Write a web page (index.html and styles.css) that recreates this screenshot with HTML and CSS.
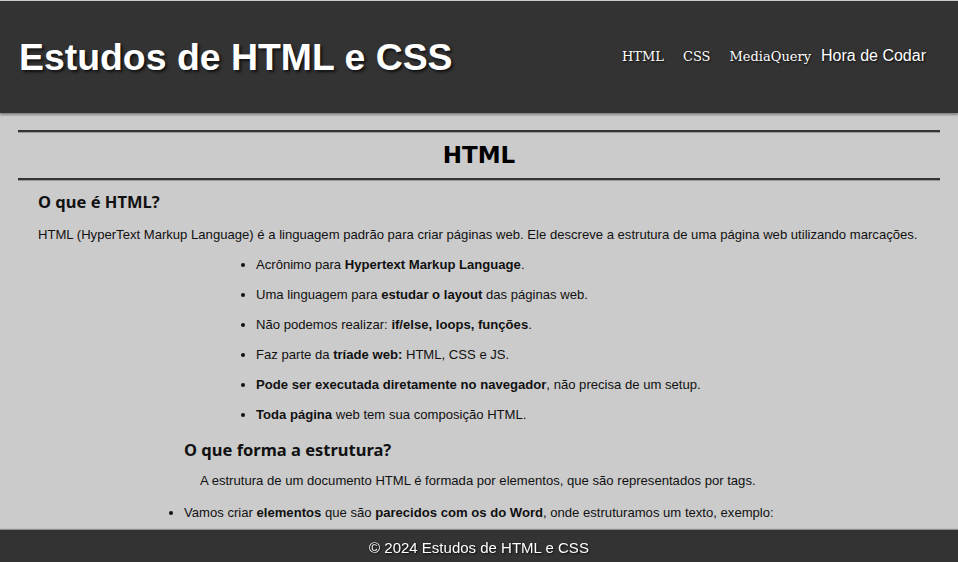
FILE: index.html
```html
<!DOCTYPE html>
<html lang="pt-BR">
<head>
<meta charset="utf-8">
<title>Estudos de HTML e CSS</title>
<link rel="stylesheet" href="styles.css">
</head>
<body>
<header class="topo">
  <h1 class="titulo">Estudos de HTML e CSS</h1>
  <nav class="menu">
    <a class="menu-link" href="#">HTML</a>
    <a class="menu-link" href="#">CSS</a>
    <a class="menu-link" href="#">MediaQuery</a>
    <a class="menu-link menu-sans" href="#">Hora de Codar</a>
  </nav>
</header>
<main class="conteudo">
  <hr class="linha">
  <h2 class="secao">HTML</h2>
  <hr class="linha">
  <h3 class="sub">O que é HTML?</h3>
  <p class="texto">HTML (HyperText Markup Language) é a linguagem padrão para criar páginas web. Ele descreve a estrutura de uma página web utilizando marcações.</p>
  <ul class="lista">
    <li>Acrônimo para <strong>Hypertext Markup Language</strong>.</li>
    <li>Uma linguagem para <strong>estudar o layout</strong> das páginas web.</li>
    <li>Não podemos realizar: <strong>if/else, loops, funções</strong>.</li>
    <li>Faz parte da <strong>tríade web:</strong> HTML, CSS e JS.</li>
    <li><strong>Pode ser executada diretamente no navegador</strong>, não precisa de um setup.</li>
    <li><strong>Toda página</strong> web tem sua composição HTML.</li>
  </ul>
  <h3 class="sub sub-estrutura">O que forma a estrutura?</h3>
  <p class="texto texto-estrutura">A estrutura de um documento HTML é formada por elementos, que são representados por tags.</p>
  <ul class="lista lista-estrutura">
    <li>Vamos criar <strong>elementos</strong> que são <strong>parecidos com os do Word</strong>, onde estruturamos um texto, exemplo:</li>
  </ul>
</main>
<footer class="rodape">© 2024 Estudos de HTML e CSS</footer>
</body>
</html>
```
FILE: styles.css
```css
* { box-sizing: border-box; }

html, body {
  margin: 0;
  padding: 0;
}

body {
  background: #cbcbcb;
  color: #111;
  font-family: "Liberation Sans", Arial, sans-serif;
  padding-top: 1px;
  padding-bottom: 40px;
}

.topo {
  height: 112px;
  background: #333;
  display: flex;
  align-items: center;
  justify-content: space-between;
  padding: 0 32px 0 19px;
  box-shadow: 0 2px 2px rgba(0, 0, 0, 0.35);
}

.titulo {
  margin: 0;
  color: #fff;
  font-family: "Liberation Sans", Arial, sans-serif;
  font-size: 37.4px;
  font-weight: bold;
  text-shadow: 2px 2px 3px rgba(0, 0, 0, 0.7);
  position: relative;
  top: 0;
}

.menu {
  display: flex;
  align-items: baseline;
  gap: 19px;
  position: relative;
  top: -1px;
}

.menu-link {
  color: #fff;
  text-decoration: none;
  font-family: "DejaVu Serif", Georgia, serif;
  font-size: 13px;
  text-shadow: 1px 1px 2px rgba(0, 0, 0, 0.8);
}

.menu-sans {
  font-family: "Liberation Sans", Arial, sans-serif;
  font-size: 16px;
  margin-left: -9px;
}

.conteudo {
  padding: 0 18px;
}

.linha {
  margin: 17px 0 0;
  border: 0;
  border-top: 2px solid #333;
  height: 0;
  box-shadow: 0 1px 0 #999;
}

.secao {
  margin: 9px 0;
  text-align: center;
  font-family: "DejaVu Sans", Verdana, sans-serif;
  font-size: 23px;
  line-height: 28px;
  font-weight: bold;
  color: #000;
}

.secao + .linha {
  margin-top: 0;
}

.sub {
  margin: 10px 0 0 20px;
  font-family: "Noto Sans", "Open Sans", sans-serif;
  font-size: 16.5px;
  line-height: 24px;
  font-weight: bold;
  color: #111;
}

.texto {
  margin: 12px 0 0 20px;
  font-size: 13.1px;
  line-height: 18px;
}

.lista {
  margin: 6px 0 0;
  padding-left: 238px;
  font-size: 13.1px;
  line-height: 30px;
}

.sub-estrutura {
  margin: 8px 0 0 166px;
}

.texto-estrutura {
  margin: 10px 0 0 182px;
}

.lista-estrutura {
  margin-top: 8px;
  padding-left: 166px;
}

.rodape {
  position: fixed;
  left: 0;
  right: 0;
  bottom: 0;
  height: 32px;
  background: #333;
  color: #fff;
  font-size: 15px;
  display: flex;
  align-items: center;
  justify-content: center;
  padding-top: 2px;
  text-shadow: 1px 1px 2px rgba(0, 0, 0, 0.8);
  box-shadow: 0 -1px 1px rgba(0, 0, 0, 0.3);
}
```
